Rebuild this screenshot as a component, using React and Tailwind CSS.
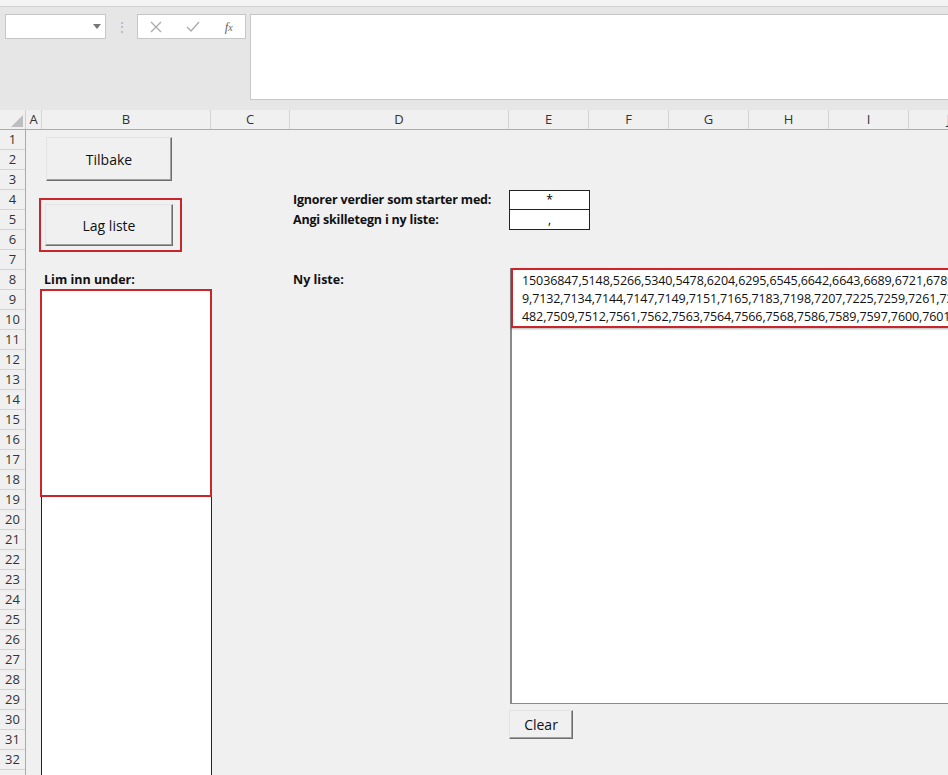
import React from "react";

const cols = [
  ["A", 16], ["B", 169], ["C", 79], ["D", 219], ["E", 80], ["F", 80], ["G", 80], ["H", 80], ["I", 80], ["J", 80],
];
const rows = Array.from({ length: 33 }, (_, i) => i + 1);

const Btn = ({ cls, children }) => (
  <div className={`absolute flex items-center justify-center bg-[#f0f0f0] border border-t-[#e3e3e3] border-l-[#e3e3e3] border-b-[#6e6e6e] border-r-[#6e6e6e] shadow-[inset_-1px_-1px_0_#a0a0a0] text-[14px] text-[#111] ${cls}`}>
    {children}
  </div>
);

export default function App() {
  return (
    <div className="w-[948px] h-[775px] overflow-hidden bg-[#e6e6e6] relative" style={{ fontFamily: "'Open Sans','Noto Sans',Arial,sans-serif" }}>
      <div className="h-[7px] bg-[#f3f3f3] border-b border-[#d0d0d0]" />
      <div className="h-[103px] flex items-start pt-[7px]">
        <div className="ml-[5px] w-[101px] h-[25px] bg-white border border-[#c6c6c6] flex items-center justify-end pr-[4px]">
          <svg width="8" height="5"><path d="M0 0h8L4 5z" fill="#777" /></svg>
        </div>
        <div className="w-[31px] h-[25px] flex items-center justify-center text-[#aaa] text-[12px]">⋮</div>
        <div className="w-[109px] h-[25px] bg-white border border-[#c6c6c6] flex items-center justify-around text-[#b0b0b0]">
          <svg width="12" height="12"><path d="M1 1l10 10M11 1L1 11" stroke="#aaa" strokeWidth="1.3" /></svg>
          <svg width="14" height="12"><path d="M1 6l4 4 8-9" stroke="#aaa" fill="none" strokeWidth="1.3" /></svg>
          <span className="italic text-[13px] text-[#666]" style={{ fontFamily: "'Liberation Serif',serif" }}>f<span className="text-[10px]">x</span></span>
        </div>
        <div className="ml-[4px] flex-1 h-[86px] bg-white border border-[#c6c6c6] border-r-0" />
      </div>
      <div className="h-[20px] flex bg-[#f0f0f0] border-b border-[#ababab] text-[13px] text-[#333]">
        <div className="w-[26px] shrink-0 border-r border-[#d0d0d0] relative">
          <svg className="absolute right-[2px] bottom-[2px]" width="12" height="12"><path d="M12 0v12H0z" fill="#bdbdbd" /></svg>
        </div>
        {cols.map(([c, w]) => (
          <div key={c} style={{ width: w }} className="shrink-0 border-r border-[#d4d4d4] flex items-center justify-center">{c}</div>
        ))}
      </div>
      <div className="flex bg-[#f0f0f0] relative">
        <div className="w-[26px] shrink-0 bg-[#f0f0f0] border-r border-[#ababab]">
          {rows.map((r) => (
            <div key={r} className="h-[20px] border-b border-[#d4d4d4] flex items-center justify-center text-[13px] text-[#333]">{r}</div>
          ))}
        </div>
        <div className="flex-1 relative">
          <Btn cls="left-[20px] top-[7px] w-[126px] h-[44px]">Tilbake</Btn>
          <div className="absolute left-[13px] top-[68px] w-[143px] h-[54px] border-2 border-[#c8262b]" />
          <Btn cls="left-[19px] top-[74px] w-[128px] h-[42px]">Lag liste</Btn>
          <div className="absolute left-[18px] top-[141px] text-[12.5px] font-bold text-[#111]">Lim inn under:</div>
          <div className="absolute left-[15px] top-[160px] w-[171px] h-[500px] bg-white border-x border-[#222]" />
          <div className="absolute left-[14px] top-[159px] w-[172px] h-[208px] border-2 border-[#c8262b]" />
          <div className="absolute left-[267px] top-[61px] text-[12.5px] tracking-[-0.2px] font-bold text-[#111]">Ignorer verdier som starter med:</div>
          <div className="absolute left-[267px] top-[81px] text-[12.5px] tracking-[-0.2px] font-bold text-[#111]">Angi skilletegn i ny liste:</div>
          <div className="absolute left-[483px] top-[60px] w-[81px] h-[40px] bg-white border border-[#222] flex flex-col text-[12px]">
            <div className="h-[19px] border-b border-[#222] flex items-center justify-center">*</div>
            <div className="flex-1 flex items-center justify-center">,</div>
          </div>
          <div className="absolute left-[267px] top-[141px] text-[12.5px] font-bold text-[#111]">Ny liste:</div>
          <div className="absolute left-[484px] top-[138px] w-[500px] h-[436px] bg-white border-l-2 border-b border-[#8a8a8a]" />
          <div className="absolute left-[485px] top-[138px] w-[500px] h-[60px] border-2 border-[#c8262b] shadow-[0_1px_2px_rgba(0,0,0,0.3)] pl-[9px] pt-[2px] text-[12.5px] tracking-[-0.1px] leading-[18px] text-[#111] whitespace-nowrap overflow-hidden">
            <div>15036847,5148,5266,5340,5478,6204,6295,6545,6642,6643,6689,6721,6789,6800</div>
            <div>9,7132,7134,7144,7147,7149,7151,7165,7183,7198,7207,7225,7259,7261,7300</div>
            <div>482,7509,7512,7561,7562,7563,7564,7566,7568,7586,7589,7597,7600,7601</div>
          </div>
          <Btn cls="left-[483px] top-[580px] w-[64px] h-[29px]">Clear</Btn>
        </div>
      </div>
    </div>
  );
}
